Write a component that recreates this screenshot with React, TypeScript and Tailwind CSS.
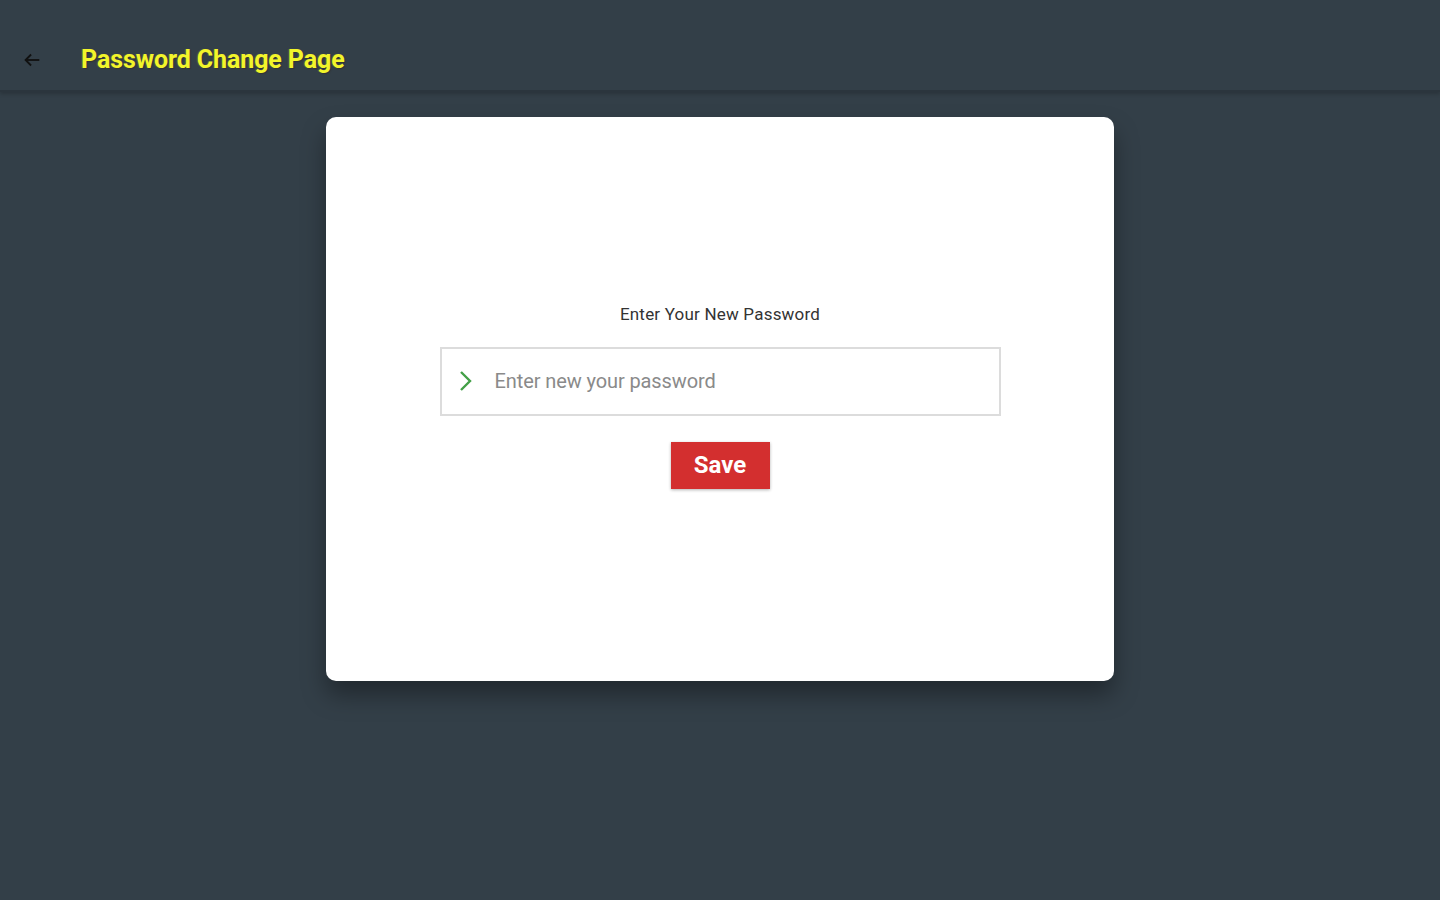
import React from 'react';

const App: React.FC = () => {
  return (
    <div className="min-h-screen w-full bg-[#333f48] font-['Roboto',sans-serif]">
      <header className="flex h-[92px] items-center border-b-2 border-[#2b353d] pt-[30px] shadow-[0_2px_4px_rgba(0,0,0,0.2)]">
        <button className="ml-[20px] flex h-6 w-6 items-center justify-center text-[#111]">
          <svg viewBox="0 0 24 24" className="h-[22px] w-[22px]" fill="none" stroke="currentColor" strokeWidth="2">
            <path d="M20 12H5" />
            <path d="M11 6l-6 6 6 6" />
          </svg>
        </button>
        <h1 className="ml-[37px] text-[25px] font-bold tracking-[-0.1px] text-[#f2f52a] [text-shadow:1px_1px_1px_#333,-1px_0_1px_#555]">
          Password Change Page
        </h1>
      </header>

      <div className="flex justify-center pt-[25px]">
        <div className="flex h-[564px] w-[788px] flex-col items-center rounded-[10px] bg-white pt-[185px] shadow-[0_14px_24px_rgba(0,0,0,0.35)]">
          <p className="text-[17px] tracking-[0.2px] text-[#333]">Enter Your New Password</p>
          <div className="mt-[19px] flex h-[69px] w-[561px] items-center border-2 border-[#dcdcdc] bg-white">
            <svg viewBox="0 0 24 24" className="ml-[12px] h-[24px] w-[24px]" fill="none" stroke="#43a047" strokeWidth="2.4">
              <path d="M7 3l9 9-9 9" />
            </svg>
            <input
              type="password"
              placeholder="Enter new your password"
              className="ml-[17px] flex-1 bg-transparent text-[20px] tracking-[-0.1px] text-[#333] outline-none placeholder:text-[#8a8a8a]"
            />
          </div>
          <button className="mt-[26px] h-[47px] w-[99px] bg-[#d32f2f] text-[24px] font-bold text-white shadow-[0_1px_3px_rgba(0,0,0,0.3)]">
            Save
          </button>
        </div>
      </div>
    </div>
  );
};

export default App;
